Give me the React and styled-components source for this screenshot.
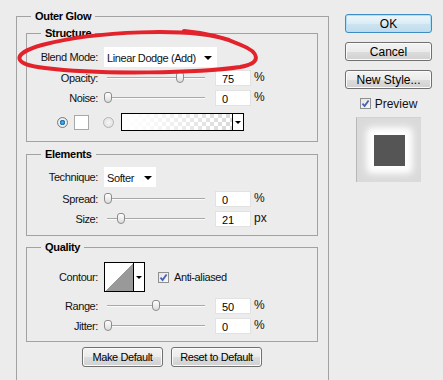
import styled, { createGlobalStyle } from "styled-components";

const GlobalStyle = createGlobalStyle`
  html, body {
    margin: 0;
    height: 100%;
    overflow: hidden;
  }
  body {
    background: #ececec;
    font-family: "Liberation Sans", Arial, sans-serif;
    font-size: 11px;
    color: #111;
  }
`;

const Page = styled.div`
  position: relative;
  display: flex;
  align-items: flex-start;
  gap: 16px;
  height: 380px;
  box-sizing: border-box;
  padding: 9px 0 0 16px;
  overflow: hidden;
`;

// group boxes (fieldset + legend, like the Windows dialog)
const OuterGroup = styled.fieldset`
  margin: 0;
  min-width: 0;
  width: 313px;
  min-height: 420px;
  box-sizing: border-box;
  border: 1px solid #a2a2a2;
  border-bottom: none;
  padding: 3px 10px 0 9px;
`;

const Group = styled.fieldset`
  margin: ${(p) => p.$top || 0}px 0 0;
  min-width: 0;
  border: 1px solid #a2a2a2;
  padding: ${(p) => p.$pt}px 0 ${(p) => p.$pb}px;
`;

const Legend = styled.legend`
  margin-left: ${(p) => p.$indent}px;
  padding: 0 4px;
  font-weight: bold;
  line-height: 14px;
  letter-spacing: -0.3px;
  color: #000;
`;

const Row = styled.div`
  display: flex;
  align-items: center;
  height: ${(p) => p.$h || 20}px;
  margin-top: ${(p) => p.$mt || 0}px;
  padding-left: ${(p) => p.$pl || 0}px;
`;

const Label = styled.span`
  width: 71px;
  margin-right: 6px;
  flex-shrink: 0;
  text-align: right;
  letter-spacing: -0.4px;
  white-space: nowrap;
`;

const Select = styled.div`
  width: ${(p) => p.$w}px;
  height: 20px;
  box-sizing: border-box;
  display: flex;
  align-items: center;
  justify-content: space-between;
  padding: 1px ${(p) => p.$pr}px 0 3px;
  background: #fff;
  letter-spacing: -0.4px;
  white-space: nowrap;
`;

const Arrow = styled.span`
  width: 0;
  height: 0;
  border-left: ${(p) => p.$s}px solid transparent;
  border-right: ${(p) => p.$s}px solid transparent;
  border-top: ${(p) => p.$s}px solid #000;
`;

const Slider = styled.div`
  position: relative;
  width: 104px;
  height: 20px;
  margin-right: 7px;
  padding: 0 3px;
  box-sizing: border-box;
  display: flex;
  align-items: center;
  flex-shrink: 0;
`;

const Track = styled.div`
  flex: 1;
  height: 1px;
  background: #a8a8a8;
  border-bottom: 1px solid #fafafa;
`;

const Thumb = styled.div`
  position: absolute;
  top: 4px;
  width: 8px;
  height: 11px;
  box-sizing: border-box;
  border: 1px solid #8c8c8c;
  border-radius: 3px 3px 4px 4px;
  background: linear-gradient(#ffffff, #dcdcdc);
`;

const NumBox = styled.div`
  width: 36px;
  height: 16px;
  box-sizing: border-box;
  margin-right: 3px;
  padding: 1px 0 0 6px;
  display: flex;
  align-items: center;
  background: #fff;
  border: 1px solid #e2e2e2;
  color: #000;
`;

const Unit = styled.span`
  font-size: 12px;
  margin-top: -2px;
`;

const Radio = styled.div`
  width: 11px;
  height: 11px;
  box-sizing: border-box;
  border-radius: 50%;
  border: 1px solid ${(p) => (p.$on ? "#7a7a7a" : "#b4b4b4")};
  background: ${(p) =>
    p.$on
      ? "radial-gradient(circle, #58b4ec 0, #1b6fb0 2.5px, #f2f2f2 3px, #d6d6d6 100%)"
      : "radial-gradient(circle, #f6f6f6 0, #dcdcdc 100%)"};
  margin-right: ${(p) => p.$mr}px;
  flex-shrink: 0;
`;

const Swatch = styled.div`
  width: 15px;
  height: 15px;
  box-sizing: border-box;
  background: #fff;
  border: 1px solid #a8a8a8;
  margin-right: 14px;
`;

const GradientPicker = styled.div`
  width: 123px;
  height: 18px;
  box-sizing: border-box;
  border: 1px solid #000;
  display: flex;
`;

const GradientFill = styled.div`
  flex: 1;
  background:
    linear-gradient(to right, #fff 0%, rgba(255, 255, 255, 0.85) 25%, rgba(255, 255, 255, 0) 100%),
    repeating-conic-gradient(#ffffff 0 25%, #d9d9d9 0 50%) 0 0 / 8px 8px;
`;

const DropPart = styled.div`
  width: 10px;
  border-left: 1px solid #000;
  background: #fff;
  display: flex;
  align-items: center;
  justify-content: center;
`;

const ContourBox = styled.div`
  width: 41px;
  height: 30px;
  box-sizing: border-box;
  border: 1px solid #000;
  display: flex;
`;

const Curve = styled.div`
  width: 29px;
  background: linear-gradient(to top left, #999 50%, #fff 50%);
`;

const CheckBox = styled.svg`
  width: 11px;
  height: 11px;
  flex-shrink: 0;
  margin-left: ${(p) => p.$ml || 0}px;
  margin-right: ${(p) => p.$mr || 5}px;
`;

const CheckText = styled.span`
  font-size: ${(p) => p.$size || 11}px;
  letter-spacing: ${(p) => (p.$size ? 0 : -0.4)}px;
`;

const ButtonRow = styled.div`
  display: flex;
  justify-content: center;
  gap: 8px;
  margin-top: 5px;
`;

const Button = styled.button`
  width: ${(p) => p.$w}px;
  height: ${(p) => p.$h || 20}px;
  padding: 0;
  font-family: "Liberation Sans", Arial, sans-serif;
  font-size: ${(p) => p.$fs || 11}px;
  letter-spacing: ${(p) => (p.$fs ? 0 : -0.4)}px;
  color: #000;
  border-radius: 3px;
  border: 1px solid ${(p) => (p.$primary ? "#3d8cc4" : "#707070")};
  box-shadow: inset 0 0 0 1px ${(p) => (p.$primary ? "#aee0fa" : "#fbfbfb")};
  background: ${(p) =>
    p.$primary
      ? "linear-gradient(#ecf6fb 0%, #dcecf5 50%, #cde4f1 51%, #bfdcec 100%)"
      : "linear-gradient(#f3f3f3 0%, #ebebeb 50%, #dddddd 51%, #d0d0d0 100%)"};
`;

const SideColumn = styled.div`
  width: 87px;
  margin-top: 5px;
  display: flex;
  flex-direction: column;
  gap: 9px;
`;

const PreviewRow = styled.div`
  display: flex;
  align-items: center;
  justify-content: center;
  height: 13px;
  margin-top: -1px;
`;

const PreviewBox = styled.div`
  align-self: center;
  width: 65px;
  height: 65px;
  margin-top: -2px;
  box-sizing: border-box;
  background: #dadada;
  border-left: 1px solid #b8b8b8;
  border-top: 1px solid #d2d2d2;
  display: flex;
  align-items: center;
  justify-content: center;
`;

const GlowSquare = styled.div`
  width: 31px;
  height: 31px;
  background: #555;
  box-shadow: 0 0 6px 6px #fff, 0 0 10px 7px rgba(255, 255, 255, 0.7);
`;

const Scribble = styled.svg`
  position: absolute;
  left: 0;
  top: 0;
  pointer-events: none;
`;

const Check = ({ ml, mr }) => (
  <CheckBox viewBox="0 0 11 11" $ml={ml} $mr={mr}>
    <defs>
      <linearGradient id="cbg" x1="0" y1="0" x2="1" y2="1">
        <stop offset="0" stopColor="#e4e4e4" />
        <stop offset="1" stopColor="#fafafa" />
      </linearGradient>
    </defs>
    <rect x="0.5" y="0.5" width="10" height="10" fill="url(#cbg)" stroke="#8e8f8f" />
    <path d="M2.5 5.6 L4.6 8 L8.6 2.4" fill="none" stroke="#4a5fb4" strokeWidth="1.8" />
  </CheckBox>
);

const SliderRow = ({ label, value, pct, unit, mt }) => (
  <Row $mt={mt}>
    <Label>{label}</Label>
    <Slider>
      <Track />
      <Thumb style={{ left: `${pct * 97 - 0.5}px` }} />
    </Slider>
    <NumBox>{value}</NumBox>
    <Unit>{unit}</Unit>
  </Row>
);

export default function App() {
  return (
    <>
      <GlobalStyle />
      <Page>
        <OuterGroup>
          <Legend $indent={5}>Outer Glow</Legend>

          <Group $pt={7} $pb={10}>
            <Legend $indent={14}>Structure</Legend>
            <Row>
              <Label>Blend Mode:</Label>
              <Select $w={113} $pr={5}>
                Linear Dodge (Add)
                <Arrow $s={4} />
              </Select>
            </Row>
            <SliderRow label="Opacity:" value="75" pct={0.75} unit="%" mt={1} />
            <SliderRow label="Noise:" value="0" pct={0} unit="%" />
            <Row $h={18} $mt={5} $pl={30}>
              <Radio $on $mr={6} />
              <Swatch />
              <Radio $mr={7} />
              <GradientPicker>
                <GradientFill />
                <DropPart>
                  <Arrow $s={3} />
                </DropPart>
              </GradientPicker>
            </Row>
          </Group>

          <Group $top={5} $pt={6} $pb={6}>
            <Legend $indent={14}>Elements</Legend>
            <Row>
              <Label>Technique:</Label>
              <Select $w={52} $pr={4}>
                Softer
                <Arrow $s={4} />
              </Select>
            </Row>
            <SliderRow label="Spread:" value="0" pct={0} unit="%" mt={2} />
            <SliderRow label="Size:" value="21" pct={0.14} unit="px" />
          </Group>

          <Group $top={4} $pt={8} $pb={5}>
            <Legend $indent={14}>Quality</Legend>
            <Row $h={30}>
              <Label>Contour:</Label>
              <ContourBox>
                <Curve />
                <DropPart>
                  <Arrow $s={3} />
                </DropPart>
              </ContourBox>
              <Check ml={13} mr={5} />
              <CheckText>Anti-aliased</CheckText>
            </Row>
            <SliderRow label="Range:" value="50" pct={0.5} unit="%" mt={4} />
            <SliderRow label="Jitter:" value="0" pct={0} unit="%" />
          </Group>

          <ButtonRow>
            <Button $w={81}>Make Default</Button>
            <Button $w={91}>Reset to Default</Button>
          </ButtonRow>
        </OuterGroup>

        <SideColumn>
          <Button $primary $w={87} $h={19} $fs={12}>OK</Button>
          <Button $w={87} $h={19} $fs={12}>Cancel</Button>
          <Button $w={87} $h={19} $fs={12}>New Style...</Button>
          <PreviewRow>
            <Check mr={4} />
            <CheckText $size={12}>Preview</CheckText>
          </PreviewRow>
          <PreviewBox>
            <GlowSquare />
          </PreviewBox>
        </SideColumn>

        <Scribble width="443" height="380" viewBox="0 0 443 380">
          <path
            d="M229 40 C190 27 95 31 42 45 C10 54 13 65 45 68 C100 75 200 73 240 67 C263 63 259 52 241 45 C226 38 206 33 184 31"
            fill="none"
            stroke="#e2232c"
            strokeWidth="4"
            strokeLinecap="round"
          />
        </Scribble>
      </Page>
    </>
  );
}
